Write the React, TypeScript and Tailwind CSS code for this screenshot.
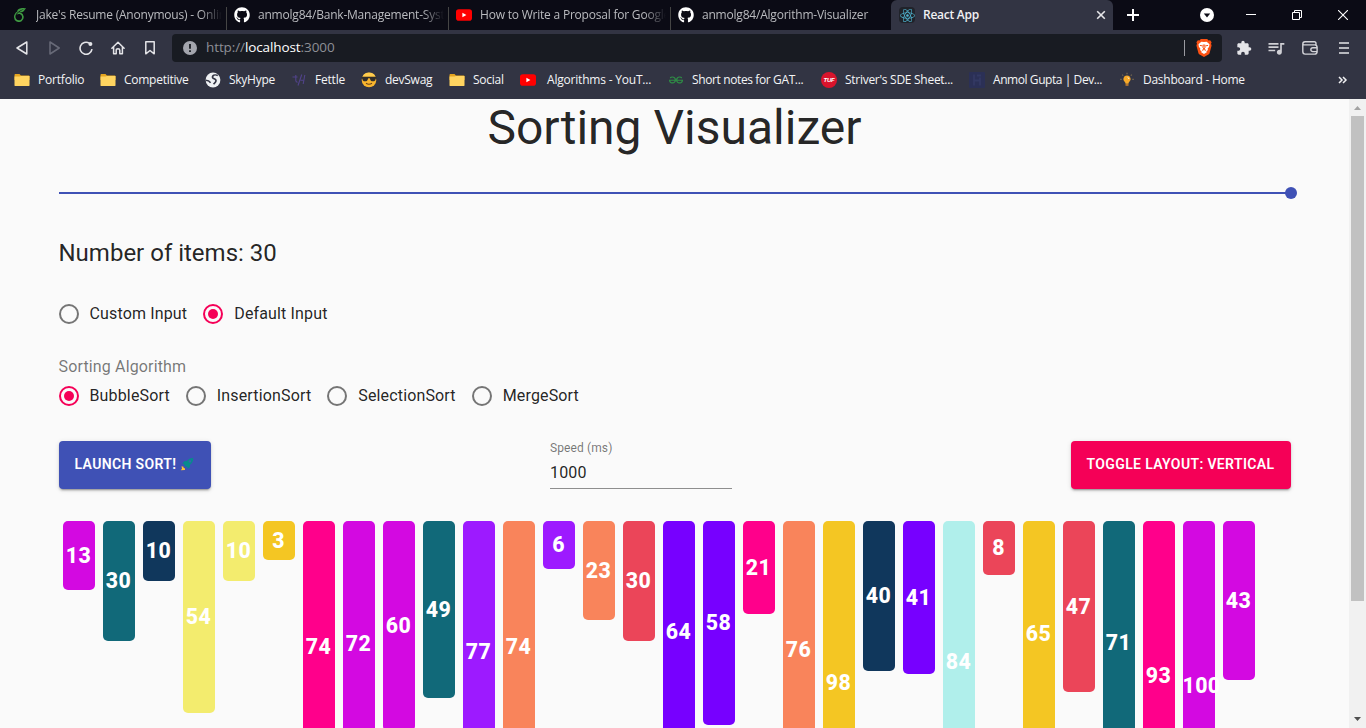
import type { ReactNode } from "react";
import { FaGithub, FaReact } from "react-icons/fa";
import { MdExtension, MdQueueMusic } from "react-icons/md";
import { SiGeeksforgeeks, SiOverleaf } from "react-icons/si";

const bars: [number, string][] = [
  [13, "#d309e1"], [30, "#116979"], [10, "#10375c"], [54, "#f3ec6e"], [10, "#f3ec6e"],
  [3, "#f4c623"], [74, "#ff008b"], [72, "#d309e1"], [60, "#d309e1"], [49, "#116979"],
  [77, "#9d1aff"], [74, "#f9845b"], [6, "#9d1aff"], [23, "#f9845b"], [30, "#eb4559"],
  [64, "#7700ff"], [58, "#7700ff"], [21, "#ff008b"], [76, "#f9845b"], [98, "#f4c623"],
  [40, "#10375c"], [41, "#7700ff"], [84, "#b0efeb"], [8, "#eb4559"], [65, "#f4c623"],
  [47, "#eb4559"], [71, "#116979"], [93, "#ff008b"], [100, "#d309e1"], [43, "#d309e1"],
];

function YouTube() {
  return (
    <svg width="16" height="16" viewBox="0 0 16 16">
      <rect x="0" y="2.3" width="16" height="11.4" rx="2.8" fill="#f00" />
      <path d="M6.4 5.7v4.6l4-2.3z" fill="#fff" />
    </svg>
  );
}

function Folder() {
  return (
    <svg width="16" height="16" viewBox="0 0 16 16">
      <path d="M.5 3.2c0-.7.4-1.2 1-1.2h4l1.4 1.6h7.6c.6 0 1 .4 1 1V8H.5z" fill="#e5a520" />
      <path d="M.5 4.6h5L7 3.9h8.5v9.3c0 .5-.4.9-1 .9H1.5c-.6 0-1-.4-1-.9z" fill="#ffd460" />
    </svg>
  );
}

function Globe() {
  return (
    <svg width="16" height="16" viewBox="0 0 16 16">
      <circle cx="8" cy="8" r="7.4" fill="#eef0f3" />
      <path d="M12.800 3.600c-1.500-.9-4-.8-4.900.3-1 1.300-.2 2.300 1.300 2.900 1.800.7 2.300 1.700 1.300 3.100-.7.900-1.200 1.500-2 2.300" fill="none" stroke="#323443" strokeWidth="1.700" />
      <path d="M.7 8.200c2 .100 3.700.8 4.900 2.500" fill="none" stroke="#323443" strokeWidth="1.500" />
    </svg>
  );
}

function Fettle() {
  return (
    <svg width="14" height="16" viewBox="0 0 14 16" fill="none" stroke="#51438a" strokeWidth="1.100">
      <path d="M.5 5h5M3.800 3v5.500c0 1 .5 1.700 1.800 1.700M6 13.500L9.800 2.500M8.600 8.200h2.600M12.800 3l-1.600 9" />
    </svg>
  );
}

function Sunglasses() {
  return (
    <svg width="16" height="16" viewBox="0 0 16 16">
      <circle cx="8" cy="8" r="7.300" fill="#f9b52d" />
      <path d="M1.400 4.800a7.300 7.300 0 0 1 13.200 0z" fill="#ffcc4d" />
      <path d="M.6 4.800h14.800v1.100c-.4.2-.6.6-.8 1.300-.3 1.500-1 2.100-2.600 2.100-1.900 0-2.700-.9-3-2.600-.2-.5-1.800-.5-2 0-.3 1.700-1.100 2.600-3 2.600-1.600 0-2.300-.6-2.600-2.100-.2-.7-.4-1.100-.8-1.300z" fill="#302d2b" />
      <path d="M5 11.300c1.800 1.200 4.200 1.200 6 0" fill="none" stroke="#69431c" strokeWidth="1.100" />
    </svg>
  );
}

function Tuf() {
  return (
    <span className="flex size-4 items-center justify-center rounded-full bg-[#d9142c] font-['Liberation_Sans',sans-serif] text-[6px] font-bold italic text-white">
      TUF
    </span>
  );
}

function Hash() {
  return (
    <svg width="16" height="16" viewBox="0 0 16 16">
      <rect width="16" height="16" rx="1" fill="#2b3056" />
      <path d="M5 2.500v11M5 8.500h6M11 5.500v8M8 3.500h4" fill="none" stroke="#333963" strokeWidth="1.800" />
    </svg>
  );
}

function Bulb() {
  return (
    <svg width="16" height="16" viewBox="0 0 16 16">
      <path d="M8 3.600a3.600 3.600 0 0 0-2.200 6.500c.5.400.7.900.7 1.600h3c0-.7.200-1.200.7-1.600A3.600 3.600 0 0 0 8 3.600z" fill="#f7a928" />
      <path d="M6.500 12.200h3v1.500h-3z" fill="#d4862b" />
      <path d="M8.600 5.400c.8.200 1.300.8 1.400 1.600" stroke="#fff" strokeWidth=".8" fill="none" />
      <path d="M8 .8v1.400M3.200 2.600l1 1M12.800 2.600l-1 1M1.200 7.400h1.500M13.300 7.400h1.500" stroke="#77694f" strokeWidth="1.200" />
    </svg>
  );
}

function BraveLion() {
  return (
    <svg width="16" height="18" viewBox="0 0 16 18">
      <path d="M4.800 0h6.400l1.300 1.400 1.600-.2 1.500 2.100-.6 1.500.6 1.700-2 7.400c-.2.700-.6 1.200-1.200 1.600L8 18l-4.400-2.500c-.6-.4-1-.9-1.200-1.600L.4 6.500 1 4.800.4 3.300l1.500-2.100 1.600.2z" fill="#fb5113" />
      <path d="M8 3.100l2.700-.4 2.800 2.600-.4 2.400-1.500 2 .4 1.300-1.600 1.200.4 1.100L8 15.100l-2.800-1.800.4-1.100L4 11l.4-1.300-1.500-2-.4-2.400 2.800-2.600z" fill="#fff" />
      <path d="M3.900 6.400l2.700.5M12.100 6.400l-2.700.5M7.300 5.500L7 9l1 .9L9 9l-.3-3.500M6 11.300l2-.8 2 .8" fill="none" stroke="#fb5113" strokeWidth="1" />
    </svg>
  );
}

function Rocket() {
  return (
    <svg width="14" height="14" viewBox="0 0 14 14">
      <path d="M13.200.9c-2.600-.2-4.600.8-6.300 3L4.300 4.200 2.200 6.600l2.200.3-.4 1.200 2 2 1.300-.5.200 2.500 2.300-1.900.2-2.500C12.300 5.800 13.400 3.600 13.200.9z" fill="#078b8d" />
      <circle cx="9.800" cy="4.300" r="1.200" fill="#3c62b0" />
      <path d="M1.500 9.300l2 .4.100 1.300 1.300.2.100 1.700-4.200.3 1.200-1.500z" fill="#ffc533" />
    </svg>
  );
}

function Tab({ icon, title, className = "" }: { icon: ReactNode; title: string; className?: string }) {
  return (
    <div className={`flex h-full items-center ${className}`}>
      <span className="flex size-4 shrink-0 items-center justify-center">{icon}</span>
      <span className="ml-2 flex-1 overflow-hidden whitespace-nowrap text-[#babbbf] [mask-image:linear-gradient(to_right,black_calc(100%-22px),transparent)]">
        {title}
      </span>
    </div>
  );
}

function TabStrip() {
  return (
    <div className="flex h-[30px] bg-[#0b0b15] text-[12px] tracking-[-0.210px]">
      <Tab
        className="w-[226px] pr-1 pl-3"
        icon={<SiOverleaf size={14} color="#3f9b42" />}
        title="Jake's Resume (Anonymous) - Online"
      />
      <div className="mt-[7px] w-0 border-l border-[#454545]" />
      <Tab className="w-[221px] pr-1 pl-[7px]" icon={<FaGithub size={16} color="#fff" />} title="anmolg84/Bank-Management-System" />
      <div className="mt-[7px] w-0 border-l border-[#454545]" />
      <Tab className="w-[221px] pr-1 pl-[7px]" icon={<YouTube />} title="How to Write a Proposal for Google Summer" />
      <div className="mt-[7px] w-0 border-l border-[#454545]" />
      <Tab className="w-[220px] pr-1 pl-[7px]" icon={<FaGithub size={16} color="#fff" />} title="anmolg84/Algorithm-Visualizer" />
      <div className="flex h-full w-[222px] items-center rounded-t-md bg-[#323443] pr-[7px] pl-2">
        <span className="flex size-4 items-center justify-center rounded-sm bg-[#20232a]">
          <FaReact size={15} color="#4fb3d0" />
        </span>
        <span className="ml-2 flex-1 font-semibold tracking-[-0.250px] text-[#f1f1f3]">React App</span>
        <svg width="10" height="10" viewBox="0 0 10 10" stroke="#e6e6e9" strokeWidth="1.600">
          <path d="M1.200 1.200l7.600 7.600M8.800 1.200L1.200 8.800" />
        </svg>
      </div>
      <div className="flex flex-1 items-center">
        <svg className="ml-3.5" width="12" height="12" viewBox="0 0 12 12" stroke="#fff" strokeWidth="2">
          <path d="M6 0v12M0 6h12" />
        </svg>
        <svg className="ml-[61px]" width="14" height="14" viewBox="0 0 14 14">
          <circle cx="7" cy="7" r="7" fill="#fff" />
          <path d="M3.800 5.400h6.400L7 9.400z" fill="#0b0b15" />
        </svg>
        <svg className="ml-8" width="10" height="10" viewBox="0 0 10 10" stroke="#fff">
          <path d="M0 4.500h10" />
        </svg>
        <svg className="ml-9" width="10" height="10" viewBox="0 0 10 10" stroke="#fff" fill="none">
          <path d="M.5 2.500h7v7h-7zM2.500 2.500v-2h7v7h-2" />
        </svg>
        <svg className="ml-9" width="10" height="10" viewBox="0 0 10 10" stroke="#fff" strokeWidth="1.100">
          <path d="M0 0l10 10M10 0L0 10" />
        </svg>
      </div>
    </div>
  );
}

function Toolbar() {
  return (
    <div className="flex h-9 items-center">
      <svg className="ml-4" width="12" height="14" viewBox="0 0 12 14" fill="none" stroke="#e4e4e8" strokeWidth="1.500" strokeLinejoin="round">
        <path d="M10.800 1v12L1 7z" />
      </svg>
      <svg className="ml-[21px]" width="12" height="14" viewBox="0 0 12 14" fill="none" stroke="#686a78" strokeWidth="1.500" strokeLinejoin="round">
        <path d="M1 1v12l9.200-6z" />
      </svg>
      <svg className="ml-[18px]" width="14" height="14" viewBox="0 0 14 14" fill="none" stroke="#e4e4e8" strokeWidth="1.600">
        <path d="M10.300 2.200A6 6 0 1 0 13 8.200" />
        <circle cx="11.400" cy="2.900" r="2" fill="#e4e4e8" stroke="none" />
      </svg>
      <svg className="ml-[18px]" width="14" height="14" viewBox="0 0 14 14" fill="none" stroke="#e4e4e8" strokeWidth="1.500" strokeLinejoin="round" strokeLinecap="round">
        <path d="M.9 7.200L7 1.200l6.100 6M2.600 6.200v6.600h2.600V9.300c0-1 .7-1.600 1.800-1.600s1.800.6 1.800 1.600v3.500h2.600V6.200" />
      </svg>
      <svg className="ml-5" width="10" height="14" viewBox="0 0 10 14" fill="none" stroke="#e4e4e8" strokeWidth="1.500" strokeLinejoin="round">
        <path d="M.8.8h8.400v12L5 9.500.8 12.800z" />
      </svg>
      <div className="ml-[17px] flex h-7 w-[1050px] items-center rounded-sm bg-[#181b22]">
        <svg className="ml-[11px]" width="14" height="14" viewBox="0 0 14 14">
          <circle cx="7" cy="7" r="7" fill="#a3a5ad" />
          <path d="M7 3v4.800M7 9.300v1.700" stroke="#181b22" strokeWidth="1.800" />
        </svg>
        <span className="ml-[9px] text-[13.500px] leading-none tracking-[-0.100px] text-[#8d8f96]">
          http://<span className="text-white">localhost</span>:3000
        </span>
        <div className="ml-auto h-4 w-px bg-[#9a9ba1]" />
        <div className="mr-2.5 ml-[11px]">
          <BraveLion />
        </div>
      </div>
      <MdExtension className="ml-3.5" size={16} color="#e4e4e8" />
      <MdQueueMusic className="ml-3.5" size={20} color="#d0d0d5" />
      <svg className="ml-4" width="16" height="14" viewBox="0 0 16 14" fill="none" stroke="#d4d4d9" strokeWidth="1.400">
        <path d="M14 3.800V2.500c0-1-.6-1.700-1.600-1.700H3C1.600.8.800 1.600.8 3v7.500c0 1.600.8 2.600 2.400 2.600h9.400c1.500 0 2.500-.8 2.500-2.400V6.200c0-1.500-.9-2.300-2.400-2.300H3C1.700 3.900.8 3.600.8 2.700M15 6.700h-4.200a1.900 1.900 0 0 0 0 3.900H15" />
      </svg>
      <svg className="ml-[21px]" width="10" height="12" viewBox="0 0 10 12" stroke="#e4e4e8" strokeWidth="1.400">
        <path d="M0 1h10M0 6h10M0 11h10" />
      </svg>
    </div>
  );
}

function Bookmark({ icon, label, className }: { icon: ReactNode; label: string; className: string }) {
  return (
    <div className={`flex shrink-0 items-center whitespace-nowrap ${className}`}>
      <span className="flex size-4 shrink-0 items-center justify-center">{icon}</span>
      {label}
    </div>
  );
}

function Bookmarks() {
  return (
    <div className="flex h-[33px] items-center pb-[5px] pl-3.5 text-[12px] tracking-[-0.260px] text-[#f4f4f6]">
      <Bookmark className="w-[86px] gap-2 tracking-[-0.2px]" icon={<Folder />} label="Portfolio" />
      <Bookmark className="w-[105px] gap-2" icon={<Folder />} label="Competitive" />
      <Bookmark className="w-[86px] gap-2" icon={<Globe />} label="SkyHype" />
      <Bookmark className="w-[70px] gap-2 tracking-[-0.2px]" icon={<Fettle />} label="Fettle" />
      <Bookmark className="w-[88px] gap-2" icon={<Sunglasses />} label="devSwag" />
      <Bookmark className="w-[71px] gap-2" icon={<Folder />} label="Social" />
      <Bookmark className="w-[148px] gap-[11px] tracking-[-0.2px]" icon={<YouTube />} label="Algorithms - YouT..." />
      <Bookmark className="w-[153px] gap-2 tracking-[-0.380px]" icon={<SiGeeksforgeeks size={14} color="#2f8d46" />} label="Short notes for GAT..." />
      <Bookmark className="w-[148px] gap-2 tracking-[-0.280px]" icon={<Tuf />} label="Striver's SDE Sheet..." />
      <Bookmark className="w-[150px] gap-2 tracking-[-0.430px]" icon={<Hash />} label="Anmol Gupta | Dev..." />
      <Bookmark className="w-[160px] gap-2" icon={<Bulb />} label="Dashboard - Home" />
      <svg className="ml-[59px]" width="10" height="8" viewBox="0 0 10 8" fill="none" stroke="#f0f0f2" strokeWidth="1.500">
        <path d="M1 1l3 3-3 3M5 1l3 3-3 3" />
      </svg>
    </div>
  );
}

function Radio({ label, checked = false }: { label: string; checked?: boolean }) {
  return (
    <label className="mr-4 flex items-center gap-[11px]">
      <svg width="20" height="20" viewBox="0 0 20 20">
        <circle cx="10" cy="10" r="9" fill="none" strokeWidth="2" stroke={checked ? "#f50057" : "#757575"} />
        {checked && <circle cx="10" cy="10" r="5" fill="#f50057" />}
      </svg>
      <span className="text-base tracking-[0.150px]">{label}</span>
    </label>
  );
}

const raised =
  "h-12 rounded-sm pb-0.5 text-sm font-semibold tracking-[0.360px] text-white shadow-[0_3px_1px_-2px_rgba(0,0,0,0.2),0_2px_2px_0_rgba(0,0,0,0.14),0_1px_5px_0_rgba(0,0,0,0.12)]";

function Page() {
  return (
    <main className="flex-1 overflow-hidden px-[58.500px] font-['Roboto',sans-serif] text-[rgba(0,0,0,0.87)]">
      <h1 className="pt-px text-center text-5xl leading-[56px]">Sorting Visualizer</h1>
      <div className="mt-[31px] flex h-3 items-center">
        <div className="h-0.5 flex-1 bg-[#3f51b5]" />
        <div className="-mr-1.5 -ml-1.5 size-3 rounded-full bg-[#3f51b5]" />
      </div>
      <h2 className="mt-[38px] text-2xl leading-8">Number of items: 30</h2>
      <div className="mt-[33px] flex h-6 items-center">
        <Radio label="Custom Input" />
        <Radio label="Default Input" checked />
      </div>
      <div className="mt-[29px] h-6 text-base leading-6 tracking-[0.150px] text-[rgba(0,0,0,0.54)]">Sorting Algorithm</div>
      <div className="mt-[5px] flex h-6 items-center">
        <Radio label="BubbleSort" checked />
        <Radio label="InsertionSort" />
        <Radio label="SelectionSort" />
        <Radio label="MergeSort" />
      </div>
      <div className="mt-[33px] flex h-12">
        <button className={`${raised} flex w-[152px] items-center gap-1 bg-[#3f51b5] px-4 whitespace-nowrap`}>
          LAUNCH SORT! <Rocket />
        </button>
        <div className="ml-[339.500px] flex w-[182px] flex-col border-b border-[#8e8e8e]">
          <span className="text-xs leading-[14px] tracking-[0.110px] text-[rgba(0,0,0,0.54)]">Speed (ms)</span>
          <span className="mt-2 text-base leading-5 tracking-[0.150px]">1000</span>
        </div>
        <button className={`${raised} ml-auto w-[220px] bg-[#f50057] whitespace-nowrap`}>TOGGLE LAYOUT: VERTICAL</button>
      </div>
      <div className="mt-8 ml-1 flex items-start gap-2">
        {bars.map(([value, color], i) => (
          <div
            key={i}
            className="flex w-8 shrink-0 flex-col justify-center rounded-[5px] text-center text-[21.300px] leading-6 font-extrabold tracking-[0.400px] text-white"
            style={{ height: 30 + value * 3, backgroundColor: color }}
          >
            {value}
          </div>
        ))}
      </div>
    </main>
  );
}

export default function App() {
  return (
    <div className="flex h-[728px] w-[1366px] flex-col overflow-hidden bg-[#fafafa]">
      <header className="h-[99px] shrink-0 bg-[#323443] font-['Open_Sans','Noto_Sans',sans-serif]">
        <TabStrip />
        <Toolbar />
        <Bookmarks />
      </header>
      <div className="flex min-h-0 flex-1">
        <Page />
        <div className="flex w-[17px] flex-col items-center bg-[#f1f1f1]">
          <svg width="17" height="17" viewBox="0 0 17 17">
            <path d="M5 11h7L8.500 7z" fill="#a3a3a3" />
          </svg>
          <div className="h-[485px] w-[13px] bg-[#c1c1c1]" />
          <svg className="mt-auto" width="17" height="17" viewBox="0 0 17 17">
            <path d="M5 6h7l-3.500 4z" fill="#505050" />
          </svg>
        </div>
      </div>
    </div>
  );
}
